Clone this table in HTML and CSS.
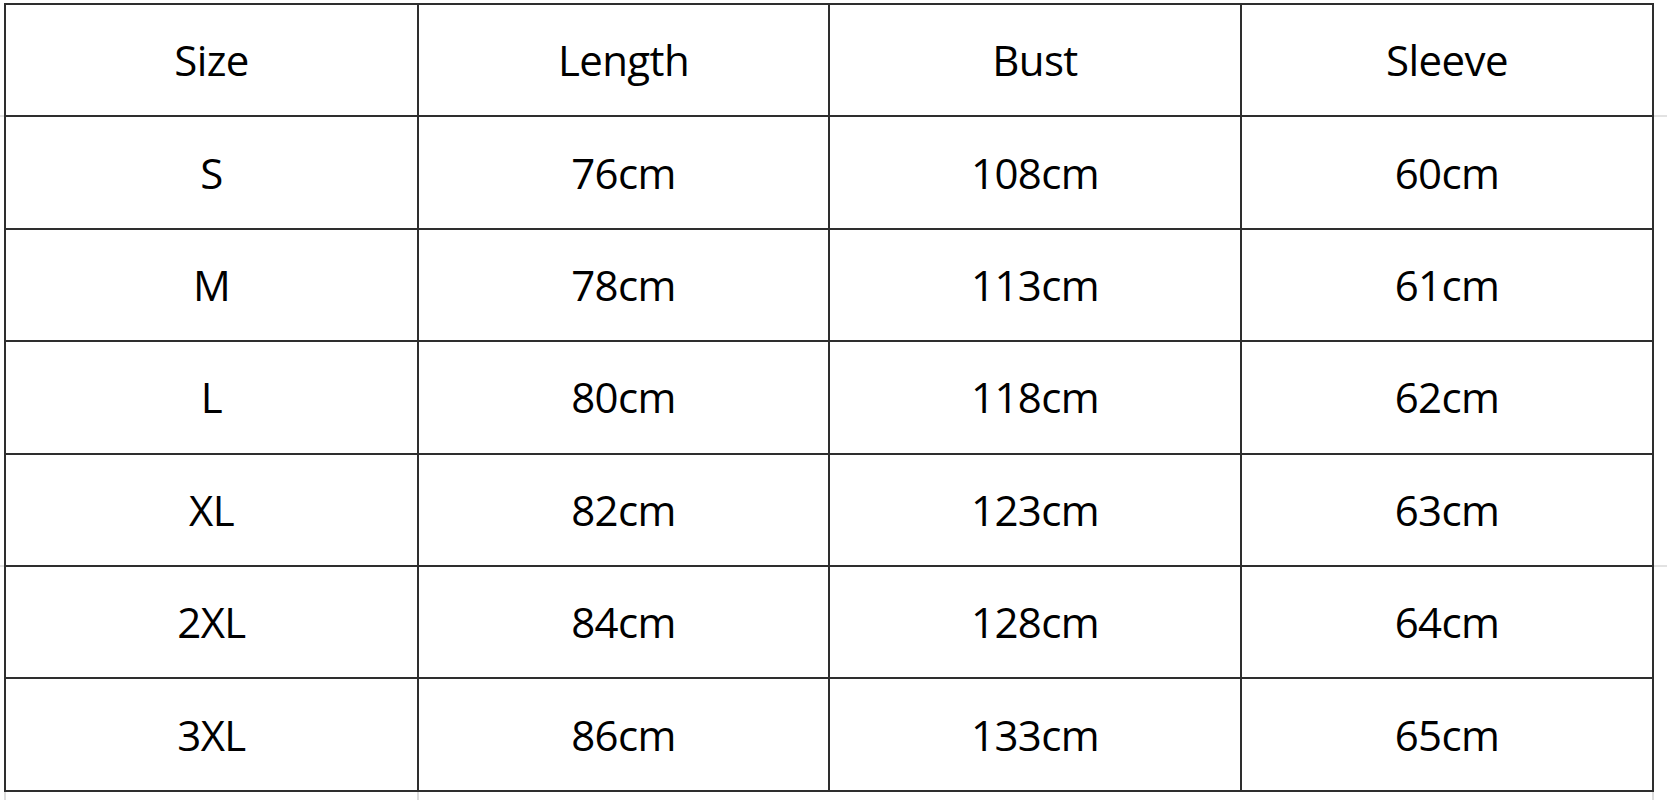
FILE: index.html
```html
<!DOCTYPE html>
<html>
<head>
<meta charset="utf-8">
<link rel="stylesheet" href="styles.css">
</head>
<body>
<div class="sheet">
  <div class="table">
    <div class="cell">Size</div><div class="cell">Length</div><div class="cell">Bust</div><div class="cell">Sleeve</div>
    <div class="cell">S</div><div class="cell">76cm</div><div class="cell">108cm</div><div class="cell">60cm</div>
    <div class="cell">M</div><div class="cell">78cm</div><div class="cell">113cm</div><div class="cell">61cm</div>
    <div class="cell">L</div><div class="cell">80cm</div><div class="cell">118cm</div><div class="cell">62cm</div>
    <div class="cell">XL</div><div class="cell">82cm</div><div class="cell">123cm</div><div class="cell">63cm</div>
    <div class="cell">2XL</div><div class="cell">84cm</div><div class="cell">128cm</div><div class="cell">64cm</div>
    <div class="cell">3XL</div><div class="cell">86cm</div><div class="cell">133cm</div><div class="cell">65cm</div>
  </div>
</div>
</body>
</html>
```
FILE: styles.css
```css
html, body {
  margin: 0;
  padding: 0;
  background: #ffffff;
}
.sheet {
  width: 1667px;
  height: 800px;
  padding: 3px 0 0 4px;
  box-sizing: border-box;
  overflow: hidden;
  background-color: #ffffff;
  background-image:
    linear-gradient(to bottom, transparent 115px, #e2e2e2 115px, #e2e2e2 117px, transparent 117px),
    linear-gradient(to bottom, transparent 565px, #e2e2e2 565px, #e2e2e2 567px, transparent 567px),
    linear-gradient(to right, transparent 4px, #dcdcdc 4px, #dcdcdc 6px, transparent 6px, transparent 417px, #dcdcdc 417px, #dcdcdc 419px, transparent 419px, transparent 1652px, #dcdcdc 1652px, #dcdcdc 1654px, transparent 1654px);
  background-size: 100% 100%, 100% 100%, 100% 8px;
  background-position: 0 0, 0 0, 0 792px;
  background-repeat: no-repeat;
}
.table {
  display: grid;
  grid-template-columns: 411px 409px 410px 410px;
  grid-template-rows: repeat(7, 110.4px);
  gap: 2px;
  padding: 2px;
  width: max-content;
  background: #2e2e2e;
}
.cell {
  background: #ffffff;
  display: flex;
  align-items: center;
  justify-content: center;
  font-family: "Open Sans", "Noto Sans", sans-serif;
  font-size: 42px;
  color: #000000;
  letter-spacing: -0.6px;
  line-height: 1;
}
```
